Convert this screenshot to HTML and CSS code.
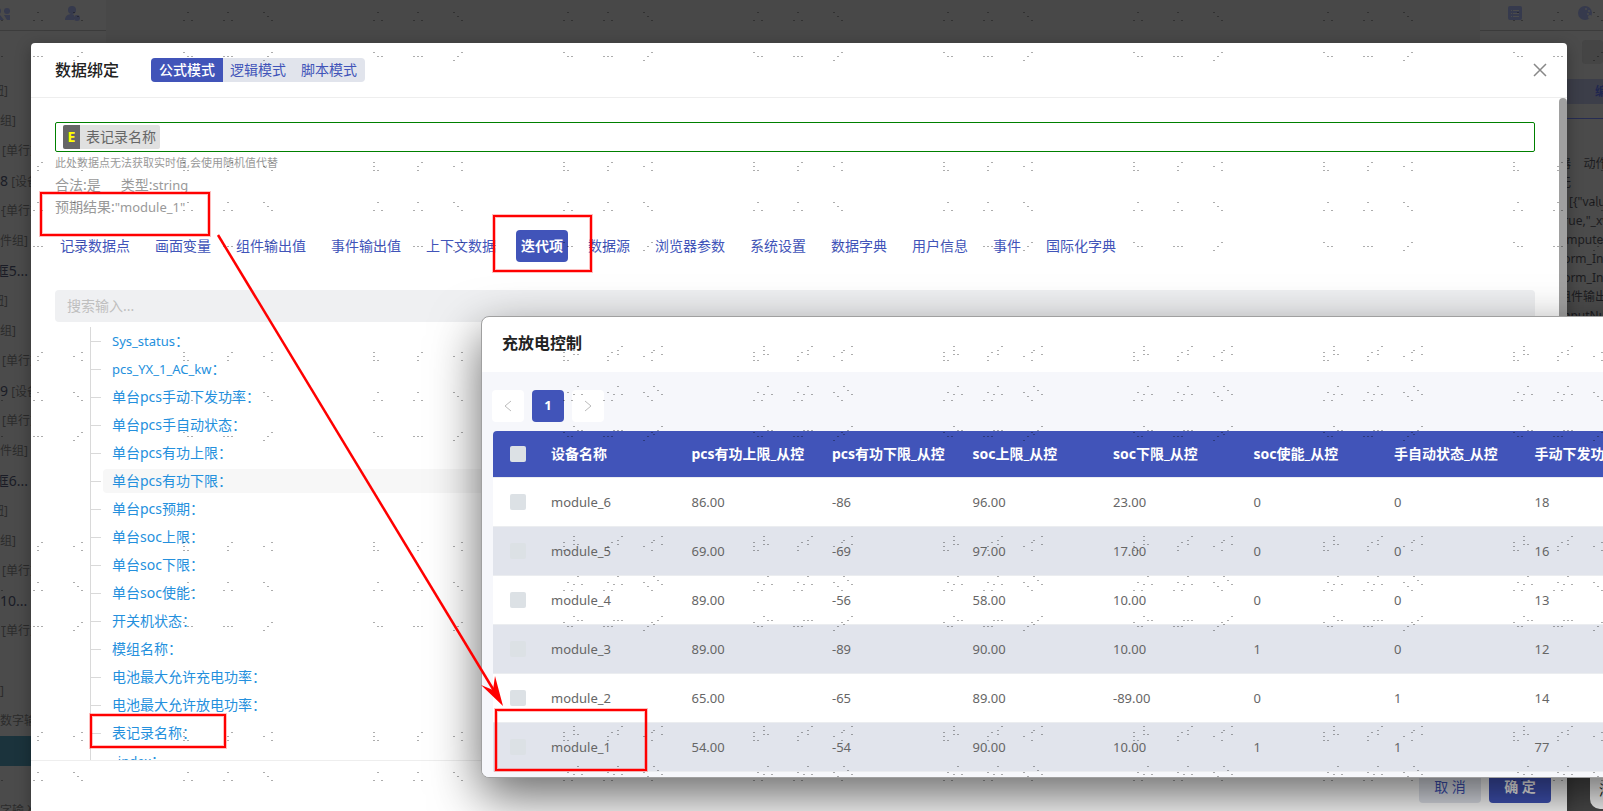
FILE: index.html
```html
<!DOCTYPE html>
<html lang="zh-CN">

<head>
    <meta charset="UTF-8">
    <meta name="viewport" content="width=device-width, initial-scale=1.0">
    <title>数据绑定</title>
    <link rel="stylesheet" href="styles.css">
</head>

<body>
    <!-- Editor behind the dialog -->
    <div class="editor">
        <aside class="outline">
            <div class="panel-bar outline-bar">
                <svg width="22" height="16" viewBox="0 0 22 16" fill="currentColor">
                    <circle cx="10" cy="5" r="3" />
                    <circle cx="19" cy="5" r="3" />
                    <path d="M2 2h5v5H2zM0 14V9h12l4 5zM16 9h6v5h-3z" />
                </svg>
                <svg width="16" height="16" viewBox="0 0 16 16" fill="currentColor">
                    <circle cx="7" cy="4" r="4" />
                    <path d="M0 14c0-4 3-6 7-6l2 1v5z" />
                    <circle cx="12" cy="12" r="3" />
                </svg>
            </div>
            <ul class="outline-list">
                <li class="short">钮]</li>
                <li class="medium">件组]</li>
                <li class="indent">[单行文本]</li>
                <li><b>8</b> [设备名]</li>
                <li class="indent">[单行文本]</li>
                <li class="long">组件组]</li>
                <li class="long"><b>框5...</b></li>
                <li class="short">钮]</li>
                <li class="medium">件组]</li>
                <li class="indent">[单行文本]</li>
                <li><b>9</b> [设备名]</li>
                <li class="indent">[单行文本]</li>
                <li class="long">组件组]</li>
                <li class="long"><b>框6...</b></li>
                <li class="short">钮]</li>
                <li class="medium">件组]</li>
                <li class="indent">[单行文本]</li>
                <li><b>10...</b></li>
                <li class="indent">[单行文本]</li>
                <li></li>
                <li>]</li>
                <li>数字输入</li>
                <li class="selected"></li>
                <li></li>
                <li>字输入</li>
            </ul>
        </aside>
        <main class="stage"></main>
        <aside class="props">
            <div class="panel-bar props-bar">
                <svg width="14" height="14" viewBox="0 0 14 14">
                    <rect width="14" height="14" rx="2" fill="currentColor" />
                    <path d="M3 4.5h1M5 4.5h6M3 7.5h1M5 7.5h6M3 10.5h1M5 10.5h6" stroke="#4b4b4b" />
                </svg>
                <svg width="14" height="14" viewBox="0 0 14 14">
                    <circle cx="7" cy="7" r="7" fill="currentColor" />
                    <g fill="#4b4b4b">
                        <circle cx="8" cy="3" r="1" />
                        <circle cx="11" cy="5" r="1" />
                        <circle cx="10" cy="8" r="1" />
                        <circle cx="12" cy="11" r="2" />
                    </g>
                </svg>
            </div>
            <div class="props-field"></div>
            <div class="props-tab">编辑</div>
            <div class="props-code">
                <p>器 &nbsp; &nbsp;动作</p>
                <p>无</p>
                <p class="indent">[{"value"</p>
                <p>true,"_xv</p>
                <p>ompute"</p>
                <p>form_Inp</p>
                <p>form_Inp</p>
                <p>组件输出</p>
                <p>InputNum</p>
            </div>
            <div class="props-card">添加</div>
        </aside>
    </div>

    <!-- Data binding dialog -->
    <div class="modal-wrap">
        <section class="modal" role="dialog" aria-labelledby="modal-title">
            <header class="modal-header">
                <h1 class="modal-title" id="modal-title">数据绑定</h1>
                <div class="modes">
                    <button class="mode active">公式模式</button>
                    <button class="mode">逻辑模式</button>
                    <button class="mode">脚本模式</button>
                </div>
                <button class="close" aria-label="关闭">
                    <svg width="14" height="14" viewBox="0 0 14 14" stroke="#888" stroke-width="1.5">
                        <path d="M1 1l12 12M13 1L1 13" />
                    </svg>
                </button>
            </header>
            <div class="modal-body">
                <div class="formula">
                    <span class="token"><b>E</b><span>表记录名称</span></span>
                </div>
                <p class="hint">此处数据点无法获取实时值,会使用随机值代替</p>
                <p class="meta"><span>合法:是</span><span>类型:<span class="latin">string</span></span></p>
                <p class="meta"><span>预期结果:<span class="latin">"module_1"</span></span></p>
                <nav class="tabs">
                    <button class="tab">记录数据点</button>
                    <button class="tab">画面变量</button>
                    <button class="tab">组件输出值</button>
                    <button class="tab">事件输出值</button>
                    <button class="tab">上下文数据</button>
                    <button class="tab active">迭代项</button>
                    <button class="tab">数据源</button>
                    <button class="tab">浏览器参数</button>
                    <button class="tab">系统设置</button>
                    <button class="tab">数据字典</button>
                    <button class="tab">用户信息</button>
                    <button class="tab">事件</button>
                    <button class="tab">国际化字典</button>
                </nav>
                <input class="search" type="text" placeholder="搜索输入..." aria-label="搜索输入">
                <ul class="tree">
                    <li><span class="latin">Sys_status<i>：</i></span></li>
                    <li><span class="latin">pcs_YX_1_AC_kw<i>：</i></span></li>
                    <li><span>单台pcs手动下发功率<i>：</i></span></li>
                    <li><span>单台pcs手自动状态<i>：</i></span></li>
                    <li><span>单台pcs有功上限<i>：</i></span></li>
                    <li class="hover"><span>单台pcs有功下限<i>：</i></span></li>
                    <li><span>单台pcs预期<i>：</i></span></li>
                    <li><span>单台soc上限<i>：</i></span></li>
                    <li><span>单台soc下限<i>：</i></span></li>
                    <li><span>单台soc使能<i>：</i></span></li>
                    <li><span>开关机状态<i>：</i></span></li>
                    <li><span>模组名称<i>：</i></span></li>
                    <li><span>电池最大允许充电功率<i>：</i></span></li>
                    <li><span>电池最大允许放电功率<i>：</i></span></li>
                    <li><span>表记录名称<i>：</i></span></li>
                    <li><span class="latin">_index<i>：</i></span></li>
                </ul>
                <div class="scrollbar"></div>
            </div>
            <footer class="modal-footer">
                <button class="btn">取 消</button>
                <button class="btn primary">确 定</button>
            </footer>
        </section>
    </div>

    <!-- Charge control window -->
    <section class="window">
        <h2 class="window-title">充放电控制</h2>
        <div class="window-body">
            <div class="pager">
                <button class="page" aria-label="上一页">
                    <svg width="8" height="12" viewBox="0 0 8 12" fill="none" stroke="#bbb">
                        <path d="M7 1L1 6l6 5" />
                    </svg>
                </button>
                <button class="page active">1</button>
                <button class="page" aria-label="下一页">
                    <svg width="8" height="12" viewBox="0 0 8 12" fill="none" stroke="#bbb">
                        <path d="M1 1l6 5-6 5" />
                    </svg>
                </button>
            </div>
            <table class="grid">
                <thead>
                    <tr>
                        <th class="check"><input type="checkbox" aria-label="全选"></th>
                        <th>设备名称</th>
                        <th>pcs有功上限_从控</th>
                        <th>pcs有功下限_从控</th>
                        <th>soc上限_从控</th>
                        <th>soc下限_从控</th>
                        <th>soc使能_从控</th>
                        <th>手自动状态_从控</th>
                        <th>手动下发功率</th>
                    </tr>
                </thead>
                <tbody>
                    <tr>
                        <td class="check"><input type="checkbox" aria-label="module_6"></td>
                        <td>module_6</td><td>86.00</td><td>-86</td><td>96.00</td><td>23.00</td><td>0</td><td>0</td><td>18</td>
                    </tr>
                    <tr>
                        <td class="check"><input type="checkbox" aria-label="module_5"></td>
                        <td>module_5</td><td>69.00</td><td>-69</td><td>97.00</td><td>17.00</td><td>0</td><td>0</td><td>16</td>
                    </tr>
                    <tr>
                        <td class="check"><input type="checkbox" aria-label="module_4"></td>
                        <td>module_4</td><td>89.00</td><td>-56</td><td>58.00</td><td>10.00</td><td>0</td><td>0</td><td>13</td>
                    </tr>
                    <tr>
                        <td class="check"><input type="checkbox" aria-label="module_3"></td>
                        <td>module_3</td><td>89.00</td><td>-89</td><td>90.00</td><td>10.00</td><td>1</td><td>0</td><td>12</td>
                    </tr>
                    <tr>
                        <td class="check"><input type="checkbox" aria-label="module_2"></td>
                        <td>module_2</td><td>65.00</td><td>-65</td><td>89.00</td><td>-89.00</td><td>0</td><td>1</td><td>14</td>
                    </tr>
                    <tr>
                        <td class="check"><input type="checkbox" aria-label="module_1"></td>
                        <td>module_1</td><td>54.00</td><td>-54</td><td>90.00</td><td>10.00</td><td>1</td><td>1</td><td>77</td>
                    </tr>
                </tbody>
            </table>
        </div>
        <svg class="dots" aria-hidden="true">
            <rect x="11" width="100%" height="100%" fill="url(#dots-window)" />
        </svg>
    </section>

    <!-- Dotted watermark, red boxes and arrow -->
    <svg class="marks" aria-hidden="true">
        <defs>
            <g id="dots-tile" stroke="#000" stroke-opacity="0.32" fill="none" shape-rendering="crispEdges">
                <path d="M0 .5h2M0 4.5h2M0 8.5h2M4 8.5h2M48 .5h2M44 4.5h2M44 8.5h2M80 4.5h2M88 .5h2M88 8.5h2" />
                <path d="M4 40.5h2M0 48.5h2M8 48.5h2M44 40.5h2M40 48.5h2M48 48.5h2M80 40.5h2M84 44.5h2M88 48.5h2" />
                <path d="M0 80.5h2M4 84.5h2M8 84.5h2M40 84.5h2M44 84.5h2M48 84.5h2M88 80.5h2M84 84.5h2M80 88.5h2" />
            </g>
            <pattern id="dots-page" x="183" y="162" width="190" height="190" patternUnits="userSpaceOnUse">
                <use href="#dots-tile" />
            </pattern>
            <pattern id="dots-window" x="91" y="29" width="190" height="190" patternUnits="userSpaceOnUse">
                <use href="#dots-tile" />
            </pattern>
            <g id="boxes" fill="none" stroke="#f00">
                <rect x="41" y="193" width="168" height="42" />
                <rect x="494" y="216" width="97" height="55" />
                <rect x="91" y="715" width="134" height="32" />
                <rect x="496" y="710" width="150" height="60" />
            </g>
        </defs>
        <rect width="100%" height="100%" fill="url(#dots-page)" />
        <use href="#boxes" stroke-width="4" opacity="0.25" />
        <use href="#boxes" stroke-width="2" />
        <path d="M218 235L496 694" stroke="#f00" stroke-width="2.5" />
        <path d="M503 706L481 685L493 690L495 676z" fill="#f00" />
    </svg>
</body>

</html>
```
FILE: styles.css
```css
* {
    box-sizing: border-box;
}

body {
    margin: 0;
    height: 100vh;
    overflow: hidden;
    position: relative;
    font-family: 'Noto Sans', 'Noto Sans CJK SC', sans-serif;
    font-size: 14px;
    color: #666;
    background: #484848;
}

h1,
h2,
p,
ul {
    margin: 0;
    padding: 0;
}

ul {
    list-style: none;
}

button,
input {
    font: inherit;
    color: inherit;
    border: none;
    margin: 0;
    padding: 0;
}

button {
    cursor: pointer;
    background: none;
    white-space: nowrap;
}

.latin {
    font-size: 13px;
}

/* editor */
.editor {
    display: flex;
    height: 100%;
    overflow: hidden;
}

.outline,
.props {
    background: #4b4b4b;
    overflow: hidden;
    white-space: nowrap;
}

.outline {
    width: 106px;
}

.stage {
    flex: 1;
}

.props {
    width: 123px;
    font-size: 12px;
    color: #1c1c20;
    position: relative;
}

.panel-bar {
    height: 31px;
    display: flex;
    color: #363a4d;
    border-bottom: 1px solid #3c3c3c;
}

.outline-bar {
    gap: 67px;
    padding-top: 6px;
}

.outline-bar svg {
    flex: none;
}

.outline-bar svg:first-child {
    margin-left: -12px;
}

.outline-bar svg + svg {
    margin-left: -12px;
}

.props-bar {
    padding: 6px 0 0 28px;
    gap: 56px;
}

.props-bar svg {
    flex: none;
}

.outline-list {
    padding-top: 45px;
    font-size: 12px;
    color: #2b2b2b;
}

.outline-list li {
    height: 30px;
    line-height: 30px;
}

.outline-list b {
    font-size: 14px;
    font-weight: 400;
    color: #1a1c26;
}

.outline-list .indent {
    padding-left: 2px;
}

.outline-list .short,
.outline-list .medium,
.outline-list .long {
    display: flex;
    justify-content: flex-end;
    width: 8px;
}

.outline-list .medium {
    width: 16px;
}

.outline-list .long {
    width: 28px;
}

.outline-list .selected {
    background: #1b333c;
}

.props-field {
    height: 24px;
    margin: 9px 0 15px 102px;
    border-radius: 4px;
    background: #454545;
}

.props-tab {
    height: 25px;
    padding-left: 115px;
    line-height: 25px;
    font-weight: 700;
    color: #20264f;
    background: #3c3e49;
}

.props-code {
    margin-top: 14px;
    padding: 35px 0 0 79px;
    border-top: 1px solid #262c52;
    line-height: 19px;
}

.props-code .indent {
    padding-left: 10px;
}

.props-card {
    position: absolute;
    left: 110px;
    bottom: 2px;
    width: 80px;
    height: 60px;
    padding: 30px 0 0 9px;
    border-radius: 10px;
    font-size: 14px;
    background: #fff;
}

/* modal */
.modal-wrap {
    position: absolute;
    inset: 0;
    padding: 43px 36px 0 31px;
}

.modal {
    display: flex;
    flex-direction: column;
    height: 100%;
    border-radius: 4px 4px 0 0;
    background: #fff;
    box-shadow: 0 4px 16px rgba(0, 0, 0, 0.3);
}

.modal-header {
    display: flex;
    align-items: center;
    height: 55px;
    padding: 0 19px 0 24px;
    border-bottom: 1px solid #eee;
}

.modal-title {
    font-size: 16px;
    font-weight: 500;
    line-height: 24px;
    color: #222;
}

.modes {
    display: flex;
    margin-left: 32px;
    border-radius: 4px;
    overflow: hidden;
    background: #e1e4ec;
    color: #4154b9;
}

.mode {
    height: 24px;
    padding: 0 8px;
    line-height: 24px;
}

.mode + .mode {
    margin-left: -1px;
}

.mode.active {
    background: #4154b9;
    color: #fff;
    font-weight: 500;
}

.close {
    display: flex;
    align-items: center;
    justify-content: center;
    width: 16px;
    height: 24px;
    margin-left: auto;
}

.modal-body {
    position: relative;
    flex: 1;
    min-height: 0;
    overflow: hidden;
    padding: 24px 32px 0 24px;
}

.formula {
    height: 30px;
    padding: 2px 7px;
    border: 1px solid #008000;
    border-radius: 2px;
}

.token {
    display: inline-flex;
    height: 24px;
    line-height: 24px;
    border-radius: 2px;
    overflow: hidden;
    background: #e0e0e0;
}

.token b {
    width: 17px;
    text-align: center;
    color: #ff0;
    background: #666;
}

.token span {
    padding: 0 4px 0 6px;
}

.hint {
    font-size: 11px;
    line-height: 22px;
    color: #999;
}

.meta {
    display: flex;
    gap: 20px;
    height: 22px;
    line-height: 22px;
    color: #999;
}

.tabs {
    display: flex;
    gap: 15px;
    margin: 12px 0 28px;
    color: #4154b9;
}

.tab {
    height: 32px;
    padding: 0 5px 2px;
    border-radius: 4px;
}

.tab.active {
    background: #4154b9;
    color: #fff;
    font-weight: 700;
}

.search {
    display: block;
    width: 100%;
    height: 32px;
    padding: 0 12px 2px;
    border-radius: 4px;
    background: #eff0f2;
}

.search::placeholder {
    color: #bfbfbf;
}

.tree {
    margin: 5px 0 0 35px;
    border-left: 1px solid #d9d9d9;
    color: #2490dd;
}

.tree li {
    display: flex;
    align-items: center;
    height: 28px;
}

.tree li::before {
    content: '';
    width: 10px;
    height: 1px;
    margin-right: 2px;
    background: #d9d9d9;
}

.tree span {
    flex: 1;
    height: 24px;
    padding-left: 9px;
    line-height: 24px;
    border-radius: 4px;
}

.tree i {
    font-family: 'Noto Sans CJK TC', sans-serif;
    font-size: 14px;
    font-style: normal;
    line-height: 1;
}

.tree .hover span {
    background: #f7f7f7;
}

.scrollbar {
    position: absolute;
    top: 0;
    right: 0;
    width: 8px;
    height: 50%;
    border-radius: 4px;
    background: #a0a0a0;
}

.modal-footer {
    display: flex;
    justify-content: flex-end;
    gap: 8px;
    padding: 10px 16px 8px;
    border-top: 1px solid #eee;
}

.btn {
    width: 62px;
    height: 32px;
    padding-bottom: 2px;
    border-radius: 4px;
    background: #e1e4ec;
    color: #4154b9;
}

.btn.primary {
    background: #4154b9;
    color: #fff;
    font-weight: 700;
}

/* floating window */
.window {
    position: absolute;
    top: 316px;
    left: 481px;
    width: 1198px;
    border: 1px solid #a0a0a0;
    border-radius: 8px;
    overflow: hidden;
    background: #fff;
    box-shadow: 0 18px 50px rgba(0, 0, 0, 0.6);
}

.window-title {
    height: 55px;
    padding: 0 20px;
    line-height: 52px;
    font-size: 16px;
    font-weight: 700;
    color: #222;
}

.window-body {
    padding: 18px 11px 5px;
    background: #f6f7fb;
}

.pager {
    display: flex;
    gap: 8px;
    margin: 0 0 9px -1px;
}

.page {
    display: flex;
    align-items: center;
    justify-content: center;
    width: 32px;
    height: 32px;
    border-radius: 4px;
    background: #fff;
}

.page.active {
    padding-bottom: 2px;
    background: #4154b9;
    color: #fff;
    font-size: 13px;
    font-weight: 700;
}

.grid {
    width: 100%;
    table-layout: fixed;
    border-spacing: 0;
    border-radius: 4px 0 0 0;
    overflow: hidden;
}

.grid th,
.grid td {
    padding: 0 0 0 8px;
    text-align: left;
    white-space: nowrap;
}

.grid th {
    height: 47px;
    padding-bottom: 2px;
    color: #fff;
    background: #4154b9;
    background-clip: padding-box;
    border-bottom: 1px solid #ebedf0;
}

.grid td {
    height: 49px;
    font-size: 13px;
    background: #fff;
    border-bottom: 1px solid #ebedf0;
}

.grid tr:nth-child(even) td {
    background: #e1e4ec;
}

.grid .check {
    width: 50px;
    padding: 0 0 0 17px;
}

.grid input {
    appearance: none;
    display: block;
    width: 16px;
    height: 16px;
    border-radius: 2px;
    background: #dce1e5;
}

.dots {
    position: absolute;
    inset: 0;
    width: 100%;
    height: 100%;
    pointer-events: none;
}

.marks {
    position: absolute;
    inset: 0;
    width: 100%;
    height: 100%;
    pointer-events: none;
}
```
